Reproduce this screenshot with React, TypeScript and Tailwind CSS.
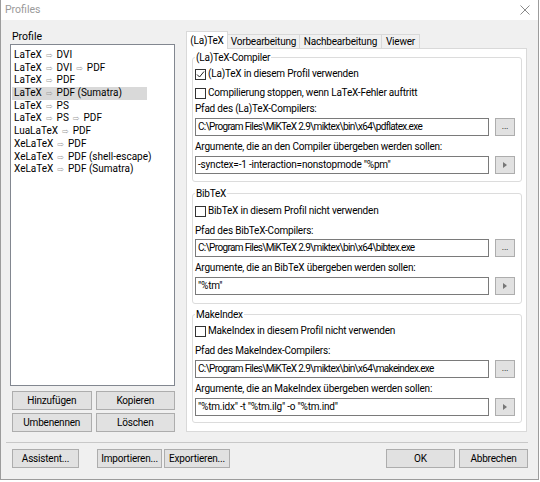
import React from 'react';

const profiles = [
  ['LaTeX', 'DVI'],
  ['LaTeX', 'DVI', 'PDF'],
  ['LaTeX', 'PDF'],
  ['LaTeX', 'PDF (Sumatra)'],
  ['LaTeX', 'PS'],
  ['LaTeX', 'PS', 'PDF'],
  ['LuaLaTeX', 'PDF'],
  ['XeLaTeX', 'PDF'],
  ['XeLaTeX', 'PDF (shell-escape)'],
  ['XeLaTeX', 'PDF (Sumatra)'],
];

const Checkbox: React.FC<{ checked?: boolean; label: string }> = ({ checked, label }) => (
  <div className="flex items-center h-[18px]">
    <div className="w-[11px] h-[11px] border border-[#333] bg-white flex items-center justify-center">
      {checked && (
        <svg width="9" height="9" viewBox="0 0 9 9">
          <path d="M1 4.5 L3.5 7 L8 1.5" fill="none" stroke="#222" strokeWidth="1" />
        </svg>
      )}
    </div>
    <span className="ml-[2px]">{label}</span>
  </div>
);

const FieldRow: React.FC<{ value: string; button: 'dots' | 'arrow'; path?: boolean; className?: string }> = ({ value, button, path, className }) => (
  <div className={`flex items-center ${className ?? ''}`}>
    <div
      className={`w-[294px] h-[18px] border border-[#7a7a7a] bg-white px-[2px] flex items-center whitespace-nowrap overflow-hidden ${path ? 'tracking-[-0.65px]' : ''}`}
    >
      {value}
    </div>
    <div className="ml-[6px] w-[20px] h-[18px] border border-[#adadad] bg-[#e1e1e1] flex items-center justify-center">
      {button === 'dots' ? (
        <span className="text-[9px] leading-none -mt-[2px]">...</span>
      ) : (
        <svg width="4" height="6" viewBox="0 0 4 6">
          <path d="M0 0 L4 3 L0 6 Z" fill="#777" />
        </svg>
      )}
    </div>
  </div>
);

const Group: React.FC<{ title: string; className?: string; children: React.ReactNode }> = ({ title, className, children }) => (
  <div className={`relative border border-[#dcdcdc] rounded-[3px] pl-[2px] ${className ?? ''}`}>
    <span className="absolute -top-[7px] left-[2px] bg-white px-[1px] leading-[14px]">{title}</span>
    {children}
  </div>
);

const Btn: React.FC<{ label: string; className?: string }> = ({ label, className }) => (
  <div className={`h-[19px] border border-[#adadad] bg-[#e1e1e1] flex items-center justify-center whitespace-nowrap ${className ?? ''}`}>
    {label}
  </div>
);

export default function App() {
  return (
    <div className="w-[540px] h-[482px] bg-white overflow-hidden text-[10px] tracking-[-0.2px] text-black font-['Roboto',sans-serif] leading-[14px]">
      <div className="w-[539px] h-[480px] flex flex-col border-l border-r border-b border-[#9c9c9c]">
        {/* title bar */}
        <div className="h-[20px] bg-white flex items-center justify-between pl-[4px] pr-[8px] text-[#9a9a9a] text-[10.5px] tracking-normal">
          <span>Profiles</span>
          <svg width="10" height="10" viewBox="0 0 10 10">
            <path d="M0.5 0.5 L9.5 9.5 M9.5 0.5 L0.5 9.5" stroke="#8a8a8a" strokeWidth="1" />
          </svg>
        </div>

        <div className="flex-1 bg-[#f0f0f0] flex flex-col">
          <div className="flex">
            {/* left column */}
            <div className="ml-[9px] w-[165px] flex flex-col">
              <div className="mt-[10px] ml-[2px] h-[14px] text-[10.5px] tracking-normal">Profile</div>
              <div className="h-[342px] border border-[#828790] bg-white pt-[4px] pl-[1px] tracking-normal">
                {profiles.map((p, i) => (
                  <div
                    key={i}
                    className={`h-[12.7px] leading-[12.7px] w-[135px] pl-[2px] whitespace-nowrap ${i === 3 ? 'bg-[#d9d9d9]' : ''}`}
                  >
                    {p.map((part, j) => (
                      <React.Fragment key={j}>
                        {j > 0 && <span className="text-[#a0a0a0] text-[8px] mx-[4px] font-['DejaVu_Sans',sans-serif]">⇨</span>}
                        {part}
                      </React.Fragment>
                    ))}
                  </div>
                ))}
              </div>
              <div className="mt-[5px] grid grid-cols-2 gap-x-[4px] gap-y-[3px] pl-[2px]">
                <Btn label="Hinzufügen" />
                <Btn label="Kopieren" />
                <Btn label="Umbenennen" />
                <Btn label="Löschen" />
              </div>
            </div>

            {/* right tab panel */}
            <div className="ml-[11px] w-[341px] flex flex-col mt-[11px]">
              <div className="flex items-end h-[18px] relative z-10 -mb-px">
                <div className="h-[18px] w-[42px] bg-white border border-b-0 border-[#d9d9d9] flex items-center justify-center">(La)TeX</div>
                <div className="h-[15px] w-[72px] border border-[#d9d9d9] border-l-0 flex items-center justify-center">Vorbearbeitung</div>
                <div className="h-[15px] w-[82px] border border-[#d9d9d9] border-l-0 flex items-center justify-center">Nachbearbeitung</div>
                <div className="h-[15px] w-[38px] border border-[#d9d9d9] border-l-0 flex items-center justify-center">Viewer</div>
              </div>
              <div className="h-[384px] border border-[#d9d9d9] bg-white pl-[5px] pt-[8px]">
                <Group title="(La)TeX-Compiler" className="w-[330px] pt-[7px] pb-[7px]">
                  <Checkbox checked label="(La)TeX in diesem Profil verwenden" />
                  <div className="mt-[1px]">
                    <Checkbox label="Compilierung stoppen, wenn LaTeX-Fehler auftritt" />
                  </div>
                  <div className="h-[14px]">Pfad des (La)TeX-Compilers:</div>
                  <FieldRow className="mt-[2px]" path value="C:\Program Files\MiKTeX 2.9\miktex\bin\x64\pdflatex.exe" button="dots" />
                  <div className="mt-[4px] h-[14px]">Argumente, die an den Compiler übergeben werden sollen:</div>
                  <FieldRow className="mt-[2px]" value={'-synctex=-1 -interaction=nonstopmode "%pm"'} button="arrow" />
                </Group>
                <Group title="BibTeX" className="w-[330px] mt-[11px] pt-[8px] pb-[8px]">
                  <Checkbox label="BibTeX in diesem Profil nicht verwenden" />
                  <div className="mt-[4px] h-[14px]">Pfad des BibTeX-Compilers:</div>
                  <FieldRow className="mt-[1px]" path value="C:\Program Files\MiKTeX 2.9\miktex\bin\x64\bibtex.exe" button="dots" />
                  <div className="mt-[4px] h-[14px]">Argumente, die an BibTeX übergeben werden sollen:</div>
                  <FieldRow className="mt-[2px]" value={'"%tm"'} button="arrow" />
                </Group>
                <Group title="MakeIndex" className="w-[330px] mt-[10px] pt-[7px] pb-[6px]">
                  <Checkbox label="MakeIndex in diesem Profil nicht verwenden" />
                  <div className="mt-[4px] h-[14px]">Pfad des MakeIndex-Compilers:</div>
                  <FieldRow className="mt-[2px]" path value="C:\Program Files\MiKTeX 2.9\miktex\bin\x64\makeindex.exe" button="dots" />
                  <div className="mt-[4px] h-[14px]">Argumente, die an MakeIndex übergeben werden sollen:</div>
                  <FieldRow className="mt-[2px]" value={'"%tm.idx" -t "%tm.ilg" -o "%tm.ind"'} button="arrow" />
                </Group>
              </div>
            </div>
          </div>

          {/* separator */}
          <div className="mt-[10px] mx-[5px] w-[522px] border-t border-[#c8c8c8]" />

          {/* bottom buttons */}
          <div className="mt-[6px] flex items-center">
            <Btn label="Assistent..." className="ml-[11px] w-[67px]" />
            <Btn label="Importieren..." className="ml-[18px] w-[65px]" />
            <Btn label="Exportieren..." className="ml-[2px] w-[66px]" />
            <div className="flex-1" />
            <Btn label="OK" className="w-[69px]" />
            <Btn label="Abbrechen" className="ml-[4px] mr-[10px] w-[69px]" />
          </div>
        </div>
      </div>
    </div>
  );
}
